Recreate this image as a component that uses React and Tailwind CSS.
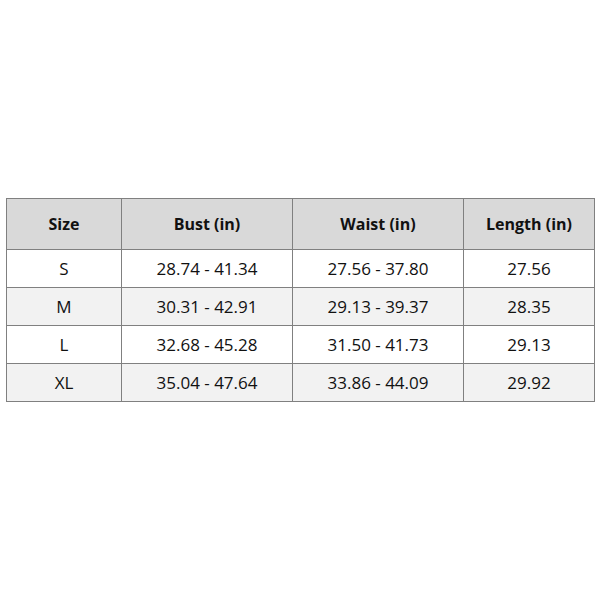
const rows = [
  ['S', '28.74 - 41.34', '27.56 - 37.80', '27.56'],
  ['M', '30.31 - 42.91', '29.13 - 39.37', '28.35'],
  ['L', '32.68 - 45.28', '31.50 - 41.73', '29.13'],
  ['XL', '35.04 - 47.64', '33.86 - 44.09', '29.92'],
]

export default function App() {
  return (
    <div className="flex h-[600px] w-[600px] items-center bg-white pl-[6px] font-['Open_Sans',sans-serif] text-[#111111]">
      <table className="w-[588px] table-fixed border-collapse text-center text-[17px]">
        <colgroup>
          <col className="w-[115px]" />
          <col className="w-[171px]" />
          <col className="w-[171px]" />
          <col className="w-[131px]" />
        </colgroup>
        <thead>
          <tr className="h-[51px] bg-[#d9d9d9] text-[16px]">
            {['Size', 'Bust (in)', 'Waist (in)', 'Length (in)'].map((h) => (
              <th key={h} className="border border-[#808080] font-bold">
                {h}
              </th>
            ))}
          </tr>
        </thead>
        <tbody>
          {rows.map((r, i) => (
            <tr key={r[0]} className={i % 2 === 1 ? 'h-[38px] bg-[#f2f2f2]' : 'h-[38px] bg-white'}>
              {r.map((c, j) => (
                <td key={j} className="border border-[#808080]">
                  {c}
                </td>
              ))}
            </tr>
          ))}
        </tbody>
      </table>
    </div>
  )
}
